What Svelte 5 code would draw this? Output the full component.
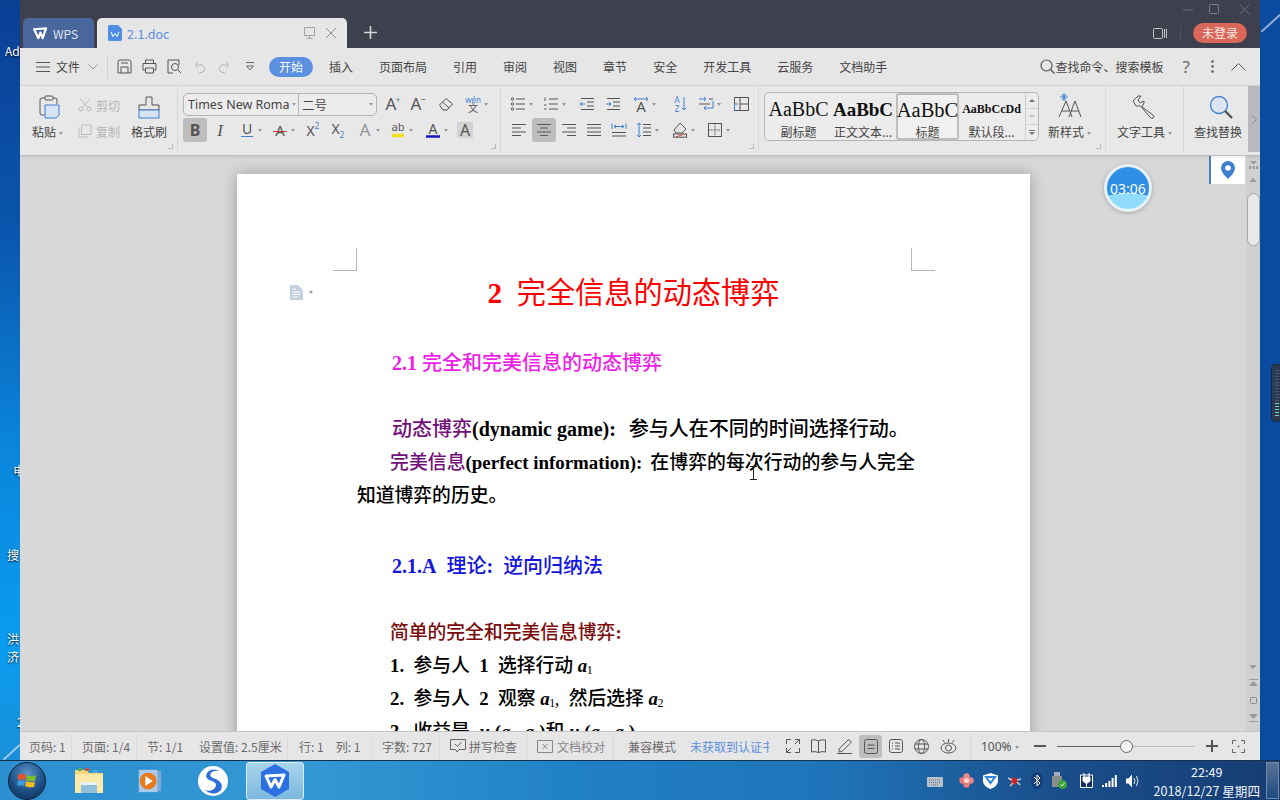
<script>
  const blue = '#3f7fd0';
  const t = (s, x = 8, y = 13, size = 15, extra = '') =>
    `<text x="${x}" y="${y}" font-size="${size}" text-anchor="middle" fill="#555" stroke="none" ${extra}>${s}</text>`;
  const lines = (rows) => rows.map(([a, y, b]) => `<path d="M${a} ${y}H${b}"/>`).join('');

  const fontRow1 = [
    { ml: 8, d: t('A', 6, 14, 17) + t('+', 13, 7, 9, 'fill-opacity=".8"') },
    { ml: 9, d: t('A', 6, 14, 17) + t('−', 13, 7, 9) },
    { ml: 12, d: '<path d="M1.5 9 8 2.5 14.5 8 9 14H5z M4.5 6 11 12"/>' },
    { ml: 11, caret: true, d: `<text x="8" y="6.5" font-size="8" text-anchor="middle" fill="${blue}" stroke="none">wén</text>` + t('文', 8, 16, 10) }
  ];
  const fontRow2 = [
    { ml: 0, active: true, d: t('B', 8, 13.5, 16, 'font-weight="700" fill="#333"') },
    { ml: 5, d: t('I', 8, 13.5, 17, 'font-style="italic" font-family="Liberation Serif"') },
    { ml: 11, caret: true, d: t('U', 8, 11.5, 14) + `<path d="M2 14.5H14" stroke="${blue}"/>` },
    { ml: 10, caret: true, d: t('A', 8, 14, 15) + '<path d="M1 9.5H15" stroke="#c9453a"/>' },
    { ml: 9, d: t('X', 6.5, 14, 14) + `<text x="13" y="7" font-size="8" text-anchor="middle" fill="${blue}" stroke="none">2</text>` },
    { ml: 9, d: t('X', 6.5, 12, 14) + `<text x="13" y="15.5" font-size="8" text-anchor="middle" fill="${blue}" stroke="none">2</text>` },
    { ml: 12, caret: true, d: t('A', 8, 14, 17, 'fill="#c4c4c4" fill-opacity=".6"') },
    { ml: 10, caret: true, d: t('ab', 8, 9, 11) + '<path d="M2 13.5H14" stroke="#f2e21d" stroke-width="3.5"/>' },
    { ml: 12, caret: true, d: t('A', 8, 12, 14) + '<path d="M1 14.5H15" stroke="#1515c8" stroke-width="2.5"/>' },
    { ml: 9, shaded: true, d: t('A', 8, 13.5, 16) }
  ];
  const paraRow1 = [
    { ml: -1, caret: true, d: '<circle cx="2.5" cy="3" r="1.2"/><circle cx="2.5" cy="8" r="1.2"/><circle cx="2.5" cy="13" r="1.2"/>' + lines([[6, 3, 15], [6, 8, 15], [6, 13, 15]]) },
    { ml: 10, caret: true, d: '<path d="M2 1.5V5M1 9h2.5M1 13h2.5"/>' + lines([[6, 3, 15], [6, 8, 15], [6, 13, 15]]) },
    { ml: 13, d: lines([[2, 2.5, 15], [8, 6, 15], [8, 10, 15], [2, 13.5, 15]]) + `<path d="M6 8H1M3 6 1 8l2 2" stroke="${blue}"/>` },
    { ml: 10, d: lines([[2, 2.5, 15], [8, 6, 15], [8, 10, 15], [2, 13.5, 15]]) + `<path d="M1 8H6M4 6l2 2-2 2" stroke="${blue}"/>` },
    { ml: 12, caret: true, d: t('A', 8, 16, 15) + `<path d="M1 3H15M3 1 1 3l2 2M13 1l2 2-2 2" stroke="${blue}"/>` },
    { ml: 16, d: `<text x="5" y="7" font-size="8" text-anchor="middle" fill="${blue}" stroke="none">A</text><text x="5" y="15.5" font-size="8" text-anchor="middle" fill="${blue}" stroke="none">Z</text><path d="M12 1V14M10 12l2 2 2-2" stroke="${blue}"/>` },
    { ml: 10, caret: true, d: `<path d="M1 3H8M6 1l2 2-2 2M15 12H6M8 10l-2 2 2 2M15 5V12" stroke="${blue}"/>` + lines([[11, 3, 15], [1, 8, 12]]) },
    { ml: 12, d: `<rect x="1.5" y="1.5" width="14" height="13"/><path d="M7 1.5V14.5M7 8H15.5" /><path d="M1.5 8H5M1.5 8V14.5" stroke="${blue}"/>` }
  ];
  const paraRow2 = [
    { ml: 0, d: lines([[1, 2.5, 15], [1, 6, 10], [1, 10, 15], [1, 13.5, 10]]) },
    { ml: 5, active: true, d: lines([[1, 2.5, 15], [4, 6, 12], [1, 10, 15], [4, 13.5, 12]]) },
    { ml: 5, d: lines([[1, 2.5, 15], [6, 6, 15], [1, 10, 15], [6, 13.5, 15]]) },
    { ml: 9, d: lines([[1, 2.5, 15], [1, 6, 15], [1, 10, 15], [1, 13.5, 15]]) },
    { ml: 9, d: lines([[1, 10.5, 15], [1, 14, 15]]) + `<path d="M1 1.5V7M15 1.5V7M3 4.5H13M5 3 3 4.5 5 6M11 3l2 1.5L11 6" stroke="${blue}"/>` },
    { ml: 9, caret: true, d: lines([[7, 2.5, 15], [7, 6, 15], [7, 10, 15], [7, 13.5, 15]]) + `<path d="M3 1V15M1 3l2-2 2 2M1 13l2 2 2-2" stroke="${blue}"/>` },
    { ml: 13, caret: true, d: '<path d="M8 1 14 7 10 11H4L2 8z"/><rect x="1.5" y="12" width="13" height="3.2"/><path d="M4 15 12 12" stroke="#d0483c"/>' },
    { ml: 12, caret: true, d: '<rect x="1.5" y="1.5" width="13" height="13"/><path d="M8 1.5V14.5M1.5 8H14.5" stroke-dasharray="1.5 1"/>' }
  ];

  const gallery = [
    { sample: 'AaBbC', label: '副标题', cls: 'g1' },
    { sample: 'AaBbC', label: '正文文本...', cls: 'g2' },
    { sample: 'AaBbC', label: '标题', cls: 'g3 picked' },
    { sample: 'AaBbCcDd', label: '默认段...', cls: 'g4' }
  ];
  const menus = ['开始', '插入', '页面布局', '引用', '审阅', '视图', '章节', '安全', '开发工具', '云服务', '文档助手'];
</script>

{#snippet tool(item)}
  <span class="tool" class:active={item.active} class:shaded={item.shaded} style:margin-left={item.ml + 'px'}>
    <svg class="ico" viewBox="0 0 16 16">{@html item.d}</svg>
    {#if item.caret}<i class="caret"></i>{/if}
  </span>
{/snippet}

{#snippet wlogo(color, w)}
  <svg width={w} height={w} viewBox="0 0 20 20" fill="none" stroke={color} stroke-width="2.6" stroke-linejoin="round">
    <path d="M2.5 5 16.5 4 12.5 15.5 10 9 7.5 15.5z" />
  </svg>
{/snippet}

<div class="desktop">
  <span class="dt d1">Ad</span>
  <span class="dt d2">电</span>
  <span class="dt d3">搜</span>
  <span class="dt d4">洪<br />济</span>
  <span class="dt d5">2</span>
  <div class="streak low"></div>
  <div class="streak high"></div>
  <div class="dock"><i class="bars"></i><i class="bars on"></i></div>

  <div class="window">
    <header class="titlebar">
      <div class="tabs">
        <div class="tab-home">{@render wlogo('#fff', 17)}<span>WPS</span></div>
        <div class="tab-doc">
          <svg width="14" height="16" viewBox="0 0 14 16"><path d="M1.5 0H10L14 4V14.5A1.5 1.5 0 0 1 12.5 16H1.5A1.5 1.5 0 0 1 0 14.5V1.5A1.5 1.5 0 0 1 1.5 0z" fill="#4f8fe6" /><path d="M3 7 5 11.5 7 8.5 9 11.5 11 7" fill="none" stroke="#fff" /></svg>
          <span class="doc-name">2.1.doc</span>
          <svg class="tab-act" width="12" height="14" viewBox="0 0 12 14" fill="none" stroke="#a5a5a5"><rect x=".5" y="1.5" width="10" height="8" /><path d="M5.5 9.5V12.5M2.5 12.5H8.5" /></svg>
          <svg class="tab-close" width="12" height="12" viewBox="0 0 12 12" stroke="#8f8f8f"><path d="M1 1 11 11M11 1 1 11" /></svg>
        </div>
        <svg class="tab-plus" width="13" height="13" viewBox="0 0 13 13" stroke="#d5d5d8" stroke-width="1.6"><path d="M6.5 0V13M0 6.5H13" /></svg>
      </div>
      <div class="winside">
        <div class="winctl">
          <svg width="10" height="10" viewBox="0 0 10 10" stroke="#6d707a"><path d="M0 6H10" /></svg>
          <svg width="10" height="10" viewBox="0 0 10 10" fill="none" stroke="#7b7e87"><rect x=".5" y=".5" width="9" height="9" rx="1" /></svg>
          <svg width="11" height="11" viewBox="0 0 11 11" stroke="#6d707a"><path d="M.5 .5 10.5 10.5M10.5 .5 .5 10.5" /></svg>
        </div>
        <div class="winuser">
          <svg width="14" height="13" viewBox="0 0 14 13" fill="none" stroke="#c2c3c8"><rect x=".5" y="1.5" width="9" height="10" rx="1" /><path d="M11.5 2V11M13.5 2V11" /></svg>
          <i class="thin-sep"></i>
          <span class="login">未登录</span>
        </div>
      </div>
    </header>

    <nav class="menubar">
      <svg class="burger" width="14" height="10" viewBox="0 0 14 10" stroke="#555"><path d="M0 .5H14M0 5H14M0 9.5H14" /></svg>
      <span class="file">文件</span>
      <svg class="chev" width="10" height="6" viewBox="0 0 10 6" fill="none" stroke="#999"><path d="M.5 .5 5 5 9.5 .5" /></svg>
      <i class="menu-sep"></i>
      <div class="quick">
        <svg width="15" height="15" viewBox="0 0 15 15" fill="none" stroke="#555"><path d="M1 3Q1 1 3 1H12Q14 1 14 3V14H1zM4 14V8H11V14M4 4H11" /></svg>
        <svg width="15" height="15" viewBox="0 0 15 15" fill="none" stroke="#555"><path d="M3.5 4V1H11.5V4M3.5 11H1V4.5H14V11H11.5M3.5 9H11.5V14H3.5z" /></svg>
        <svg width="15" height="15" viewBox="0 0 15 15" fill="none" stroke="#555"><path d="M6 14H1V1H12V6" /><circle cx="8" cy="8" r="3.5" /><path d="M10.5 10.5 14 14" /></svg>
        <svg class="undo" width="13" height="12" viewBox="0 0 13 12" fill="none" stroke="#b8b8b8"><path d="M4 1 1 4 4 7M1 4H8A4 4 0 0 1 8 11.5H5" /></svg>
        <svg width="13" height="12" viewBox="0 0 13 12" fill="none" stroke="#b8b8b8"><path d="M9 1 12 4 9 7M12 4H5A4 4 0 0 0 5 11.5H8" /></svg>
        <svg class="more" width="8" height="9" viewBox="0 0 8 9" fill="none" stroke="#666"><path d="M0 .5H8M.5 4 4 8 7.5 4z" /></svg>
      </div>
      <ul class="menus">
        {#each menus as m, i}<li class:current={i === 0}>{m}</li>{/each}
      </ul>
      <div class="menu-right">
        <div class="cmd">
          <svg width="15" height="15" viewBox="0 0 15 15" fill="none" stroke="#555" stroke-width="1.2"><circle cx="6.5" cy="6.5" r="5.5" /><path d="M10.5 10.5 14.5 14.5" /></svg>
          <span>查找命令、搜索模板</span>
        </div>
        <span class="help">?</span>
        <svg width="3" height="13" viewBox="0 0 3 13" fill="#555"><circle cx="1.5" cy="1.5" r="1.2" /><circle cx="1.5" cy="6.5" r="1.2" /><circle cx="1.5" cy="11.5" r="1.2" /></svg>
        <svg width="15" height="8" viewBox="0 0 15 8" fill="none" stroke="#555"><path d="M.5 7.5 7.5 .5 14.5 7.5" /></svg>
      </div>
    </nav>

    <section class="ribbon">
      <div class="grp clip">
        <div class="big paste">
          <svg width="24" height="24" viewBox="0 0 24 24" fill="none" stroke="#555"><path d="M5 3H18Q20 3 20 5V9M5 3Q3 3 3 5V18Q3 20 5 20H7" /><rect x="8" y="1" width="8" height="4" rx="1" fill="#e6e6e6" /><path d="M8 10H22V20L19 23H8z" fill="#d6e3f3" stroke={blue} /></svg>
          <span>粘贴<i class="caret"></i></span>
        </div>
        <div class="mini">
          <div class="mini-row">
            <svg width="14" height="14" viewBox="0 0 14 14" fill="none" stroke="#bbb"><circle cx="3" cy="11" r="2" /><circle cx="11" cy="11" r="2" /><path d="M4.5 9.5 12 1M9.5 9.5 2 1" /></svg>
            <span>剪切</span>
          </div>
          <div class="mini-row">
            <svg width="14" height="14" viewBox="0 0 14 14" fill="none" stroke="#bbb"><path d="M1 3.5V13H10.5M3.5 1H13V10.5H3.5z" /></svg>
            <span>复制</span>
          </div>
        </div>
        <div class="big painter">
          <svg width="22" height="24" viewBox="0 0 22 24" fill="none" stroke="#555"><path d="M8 2H14V10H21V15H1V10H8z" /><rect x="1" y="15" width="20" height="8" fill="#d6e3f3" stroke={blue} /></svg>
          <span>格式刷</span>
        </div>
        <i class="launch"></i>
      </div>

      <div class="grp font">
        <div class="row">
          <div class="fontbox">
            <span class="fname">Times New Roma<i class="caret"></i></span>
            <span class="fsize">二号<i class="caret"></i></span>
          </div>
          {#each fontRow1 as item}{@render tool(item)}{/each}
        </div>
        <div class="row">
          {#each fontRow2 as item}{@render tool(item)}{/each}
        </div>
        <i class="launch"></i>
      </div>

      <div class="grp para">
        <div class="row">
          {#each paraRow1 as item}{@render tool(item)}{/each}
        </div>
        <div class="row">
          {#each paraRow2 as item}{@render tool(item)}{/each}
        </div>
        <i class="launch"></i>
      </div>

      <div class="grp styles">
        <div class="gallery">
          {#each gallery as g}
            <div class="gitem {g.cls}"><b>{g.sample}</b><span>{g.label}</span></div>
          {/each}
          <div class="gscroll">
            <span><i class="up"></i></span>
            <span><i class="down off"></i></span>
            <span><i class="bar"></i><i class="down"></i></span>
          </div>
        </div>
        <div class="big newstyle">
          <svg width="26" height="26" viewBox="0 0 26 26" fill="none" stroke="#555"><path d="M5 1 9 7M9 1 5 7M7 .5V8M3 4H11" stroke={blue} /><path d="M2 24 9 8 15 24M5 18H12M12 24 18 8 24 24M14 18H22" /></svg>
          <span>新样式<i class="caret"></i></span>
        </div>
        <i class="launch"></i>
      </div>

      <div class="grp wordtool">
        <div class="big">
          <svg width="24" height="24" viewBox="0 0 24 24" fill="none" stroke="#555"><path d="M1 6 6 1H9L6 5 8 8 12 6V8L10 12 21 20Q23 22 21 23 19 24 18 22L8.500 11 4 11z" /></svg>
          <span>文字工具<i class="caret"></i></span>
        </div>
      </div>

      <div class="grp findrep">
        <div class="big">
          <svg width="24" height="24" viewBox="0 0 24 24" stroke="#555"><circle cx="10" cy="10" r="8.5" fill="#dde6f0" stroke={blue} stroke-width="1.3" /><path d="M16 16 23 23" stroke-width="2.4" /></svg>
          <span>查找替换</span>
        </div>
      </div>

      <div class="ribbon-next">
        <svg width="5" height="9" viewBox="0 0 5 9" fill="none" stroke="#888"><path d="M.5 .5 4.5 4.5 .5 8.5" /></svg>
      </div>
    </section>

    <main class="workspace">
      <div class="canvas">
        <article class="page">
          <i class="crop left"></i>
          <i class="crop right"></i>
          <div class="smarttag">
            <svg width="13" height="15" viewBox="0 0 13 15"><path d="M0 0H8L13 5V15H0z" fill="#c3d0df" /><path d="M2.5 4H6M2.5 7H10.5M2.5 9.5H10.5M2.5 12H8" stroke="#fff" /></svg>
            <i class="caret"></i>
          </div>

          <h1 class="ln title"><b>2</b>&nbsp;&nbsp;完全信息的动态博弈</h1>
          <h2 class="ln sec"><b>2.1</b> 完全和完美信息的动态博弈</h2>
          <p class="ln p1"><span class="term">动态博弈</span><b>(dynamic game):</b><span class="after">参与人在不同的时间选择行动。</span></p>
          <p class="ln p2"><span class="term">完美信息</span><b>(perfect information):</b><span class="after">在博弈的每次行动的参与人完全</span></p>
          <p class="ln p3">知道博弈的历史。</p>
          <h3 class="ln theory"><b>2.1.A</b>&nbsp;&nbsp;理论<b>:</b>&nbsp;&nbsp;逆向归纳法</h3>
          <p class="ln simple">简单的完全和完美信息博弈<b>:</b></p>
          <p class="ln item"><b>1.</b>&nbsp;&nbsp;参与人&nbsp;&nbsp;<b>1</b>&nbsp;&nbsp;选择行动 <em>a<sub>1</sub></em></p>
          <p class="ln item"><b>2.</b>&nbsp;&nbsp;参与人&nbsp;&nbsp;<b>2</b>&nbsp;&nbsp;观察 <em>a<sub>1</sub></em>,&nbsp;&nbsp;然后选择 <em>a<sub>2</sub></em></p>
          <p class="ln item"><b>3.</b>&nbsp;&nbsp;收益是&nbsp;&nbsp;<em>u<sub>1</sub></em><b>(</b><em>a<sub>1</sub></em><b>,</b> <em>a<sub>2</sub></em><b>)</b>和 <em>u<sub>2</sub></em><b>(</b><em>a<sub>1</sub></em><b>,</b> <em>a<sub>2</sub></em><b>)</b></p>

          <svg class="ibeam" width="7" height="14" viewBox="0 0 7 14" fill="none" stroke="#222"><path d="M0 .5H7M3.5 .5V13.5M0 13.5H7" /></svg>
        </article>

        <div class="timer"><span>03:06</span></div>
        <div class="pin">
          <svg width="14" height="18" viewBox="0 0 14 18"><path d="M7 0A7 7 0 0 1 14 7C14 11 10 15 7 18 4 15 0 11 0 7A7 7 0 0 1 7 0z" fill="#3f7fd0" /><circle cx="7" cy="7" r="2.8" fill="#fff" /></svg>
        </div>
      </div>

      <aside class="vscroll">
        <div class="vtop">
          <svg width="9" height="9" viewBox="0 0 9 9" fill="#9a9a9a"><path d="M1 0H8L4.5 3.5zM0 5H2V8H0zM3.5 5H5.5V8H3.5zM7 5H9V8H7z" /></svg>
          <i class="tri-up"></i>
        </div>
        <div class="thumb"></div>
        <div class="vbottom">
          <i class="tri-down"></i>
          <svg width="9" height="9" viewBox="0 0 9 9" fill="#9a9a9a"><path d="M0 1H9V2H0zM4.5 3 9 8H0z" /></svg>
          <svg width="9" height="9" viewBox="0 0 9 9" fill="none" stroke="#888"><rect x="1.5" y="1.5" width="6" height="6" rx="1" /></svg>
          <svg width="9" height="9" viewBox="0 0 9 9" fill="#9a9a9a"><path d="M0 0H9L4.5 5zM0 7H9V8H0z" /></svg>
        </div>
      </aside>
    </main>

    <footer class="status">
      <span class="st s1">页码: 1</span>
      <span class="st s2">页面: 1/4</span>
      <span class="st s3">节: 1/1</span>
      <span class="st s4">设置值: 2.5厘米</span>
      <span class="st s5"><span>行: 1</span><span>列: 1</span></span>
      <span class="st s6">字数: 727</span>
      <span class="st s7">
        <svg width="16" height="14" viewBox="0 0 16 14" fill="none" stroke="#666"><path d="M.5 .5H15.5V10.5H9L7 13 5.5 10.5H.5zM5 5 7.5 7.5 11.5 3" /></svg>
        拼写检查
      </span>
      <span class="st s8">
        <svg width="16" height="13" viewBox="0 0 16 13" fill="none" stroke="#888"><path d="M.5 .5H15.5V12.5H.5zM5.5 4 10.5 9M10.5 4 5.5 9" /></svg>
        文档校对
      </span>
      <span class="st s9">兼容模式</span>
      <span class="st s10"><span>未获取到认证书</span></span>
      <div class="views">
        <svg width="14" height="14" viewBox="0 0 14 14" fill="none" stroke="#555"><path d="M.5 5V.5H5M9 .5H13.5V5M13.5 9V13.5H9M5 13.5H.5V9M1 13 5 9M13 1 9 5" /></svg>
        <svg width="15" height="14" viewBox="0 0 15 14" fill="none" stroke="#555"><path d="M7.5 2Q4 0 .5 1V13Q4 12 7.5 13.5 11 12 14.5 13V1Q11 0 7.5 2zM7.5 2V13.5" /></svg>
        <svg width="15" height="15" viewBox="0 0 15 15" fill="none" stroke="#555"><path d="M2 10 11 1Q12 .5 13.5 2 14.5 3.5 13.5 4L5 12.5 2 13zM0 14.5H15" /></svg>
        <span class="view-on"><svg width="14" height="15" viewBox="0 0 14 15" fill="none" stroke="#555"><rect x=".5" y=".5" width="13" height="14" rx="2" /><path d="M3.5 6H10.5M3.5 9.5H10.5" /></svg></span>
        <svg width="14" height="14" viewBox="0 0 14 14" fill="none" stroke="#555"><rect x=".5" y=".5" width="13" height="13" rx="2" /><path d="M3 4H4M6 4H11M3 7H4M6 7H11M3 10H4M6 10H11" /></svg>
        <svg width="15" height="15" viewBox="0 0 15 15" fill="none" stroke="#555"><circle cx="7.5" cy="7.5" r="7" /><ellipse cx="7.5" cy="7.5" rx="3.2" ry="7" /><path d="M1 5H14M1 10H14" /></svg>
        <svg width="17" height="15" viewBox="0 0 17 15" fill="none" stroke="#555"><path d="M8.5 0V3M3 1 4.5 3.5M14 1 12.5 3.5" /><ellipse cx="8.5" cy="9" rx="7.5" ry="5" /><circle cx="8.5" cy="9" r="3" /></svg>
      </div>
      <div class="zoombar">
        <span class="pct">100%<i class="caret"></i></span>
        <svg width="12" height="2" viewBox="0 0 12 2" fill="#555"><rect width="12" height="2" /></svg>
        <div class="slider"><i class="knob"></i></div>
        <svg width="12" height="12" viewBox="0 0 12 12" fill="#555"><path d="M5 0H7V5H12V7H7V12H5V7H0V5H5z" /></svg>
        <svg class="fit" width="13" height="13" viewBox="0 0 13 13" fill="none" stroke="#666"><path d="M.5 4V.5H4M9 .5H12.5V4M12.5 9V12.5H9M4 12.5H.5V9" /><circle cx="6.5" cy="6.5" r=".6" /></svg>
      </div>
    </footer>
  </div>

  <div class="taskbar">
    <div class="orb">
      <svg width="20" height="20" viewBox="0 0 20 20">
        <path d="M1 4Q5 2 9 4L8 9Q5 7.5 1 9z" fill="#e8532d" />
        <path d="M10 4Q14 6 19 4L18 10Q14 11 9 9z" fill="#7fbb2f" />
        <path d="M1 10Q4 8.5 8 10L7 15Q4 13.5 0 15z" fill="#3c9be0" />
        <path d="M9 10Q13 12 18 11L17 16Q12 17 8 15z" fill="#f4bb1c" />
      </svg>
    </div>
    <div class="tb-app folder">
      <svg width="32" height="32" viewBox="0 0 32 32"><path d="M2 5H14L16 8H30V28H2z" fill="#f4d77c" /><path d="M2 9H30V28H2z" fill="#fbe9a8" /><path d="M5 3H9V6H5z" fill="#5fae4c" /><path d="M12 3H16V6H12z" fill="#c9503f" /><path d="M20 5H25V8H20z" fill="#4aa5d8" /><path d="M8 17H24V28H8z" fill="#8fc0dc" /><path d="M8 17H24V20H8z" fill="#e8f3f8" /></svg>
    </div>
    <div class="tb-app media">
      <svg width="26" height="28" viewBox="0 0 28 28"><path d="M20 3H26V25H20z" fill="#7aa9d4" /><path d="M2 2H22V26H2z" fill="#a9c9e6" /><circle cx="12" cy="14" r="9" fill="#e9791b" /><path d="M9 8.5 17 14 9 19.5z" fill="#fff" /></svg>
    </div>
    <div class="tb-app sogou">
      <svg width="32" height="32" viewBox="0 0 32 32"><circle cx="16" cy="16" r="15" fill="#fff" /><path d="M23 6Q14 2 10 8 7 14 15 16 21 18 18 23 15 27 8 25 17 32 24 25 27 18 19 14 11 12 14 8 16 5 23 6z" fill="#2c6fd6" /></svg>
    </div>
    <div class="tb-app tb-wps">
      <svg width="30" height="33" viewBox="0 0 30 33"><path d="M15 0 29 8V25L15 33 1 25V8z" fill="#2c6fe0" /><path d="M6 12 24 11 19 23 15 15.5 11 23z" fill="none" stroke="#fff" stroke-width="3" stroke-linejoin="round" /></svg>
    </div>

    <div class="tray">
      <svg class="kb" width="16" height="12" viewBox="0 0 16 12"><rect y="2" width="16" height="10" rx="1" fill="#b8c2cc" /><path d="M2 5H14M2 7.5H14M4 10H12" stroke="#68737e" stroke-dasharray="1 1" /></svg>
      <svg width="15" height="15" viewBox="0 0 15 15"><circle cx="7.5" cy="3.5" r="3.2" fill="#e88" /><circle cx="3.5" cy="7.5" r="3.2" fill="#e77" /><circle cx="11.5" cy="7.5" r="3.2" fill="#e88" /><circle cx="7.5" cy="11.5" r="3.2" fill="#e77" /><circle cx="7.5" cy="7.5" r="2.6" fill="#f3d3d3" /></svg>
      <svg width="15" height="16" viewBox="0 0 15 16"><path d="M7.5 0 15 2.5V8Q15 13 7.5 16 0 13 0 8V2.5z" fill="#fff" /><path d="M3 4H12L7.5 10z" fill="none" stroke="#2e86de" stroke-width="2" /></svg>
      <svg width="15" height="13" viewBox="0 0 15 13"><circle cx="7" cy="7" r="3.4" fill="#c22" /><path d="M1 4 5 6M3 12 6 9M14 5 10 6M13 11 10 8" stroke="#c7ccd2" stroke-width="1.5" /></svg>
      <svg width="12" height="17" viewBox="0 0 12 17"><ellipse cx="6" cy="8.5" rx="6" ry="8.5" fill="#123d78" /><path d="M3 5 9 11 6 14V3L9 6 3 12" fill="none" stroke="#fff" /></svg>
      <svg width="15" height="17" viewBox="0 0 15 17"><rect x="2" width="6" height="4" fill="#aab" /><rect x="0" y="4" width="10" height="11" fill="#8a8f8a" /><circle cx="10.5" cy="12.5" r="4.5" fill="#3aa33a" /><path d="M8.5 12.5 10 14 12.5 11" fill="none" stroke="#fff" /></svg>
      <svg class="plug" width="13" height="15" viewBox="0 0 13 15"><path d="M.5 2H12.5V14.5H.5z" fill="#14305c" stroke="#fff" /><path d="M4 0V4M9 0V4M3 4H10V8L7.5 10H5.5L3 8zM6.5 10V14.5" fill="#fff" stroke="#fff" /></svg>
      <svg width="15" height="12" viewBox="0 0 15 12" fill="#fff"><rect y="10" width="2" height="2" /><rect x="3.2" y="8" width="2" height="4" /><rect x="6.4" y="6" width="2" height="6" /><rect x="9.6" y="3" width="2" height="9" /><rect x="12.8" width="2" height="12" /></svg>
      <svg width="14" height="14" viewBox="0 0 14 14"><path d="M0 4.5H2.5L6 .5V13.5L2.5 9.5H0z" fill="#fff" /><path d="M8 4Q10 7 8 10M10.5 2Q13.5 7 10.5 12" fill="none" stroke="#dfe7ef" /></svg>
    </div>
    <div class="clock">
      <span>22:49</span>
      <span>2018/12/27 星期四</span>
    </div>
    <div class="show-desktop"></div>
  </div>
</div>

<style>
:global(body) {
  margin: 0;
  overflow: hidden;
}
.desktop {
  position: relative;
  width: 1280px;
  height: 800px;
  overflow: hidden;
  font-family: "Noto Sans CJK SC", "Noto Sans", sans-serif;
  background: #0a4ba0;
}
.desktop::before {
  content: "";
  position: absolute;
  left: 0;
  top: 0;
  width: 20px;
  height: 760px;
  background: linear-gradient(180deg, #0b3f94 0, #0a55ad 30%, #0a87dc 60%, #0a9cf0 85%, #1a8fd8 100%);
}
.streak {
  position: absolute;
  width: 26px;
  height: 2px;
  background: rgba(255, 255, 255, .55);
  transform: rotate(-42deg);
}
.streak.low {
  left: 0;
  top: 750px;
}
.streak.high {
  left: 1258px;
  top: 22px;
}
.dt {
  position: absolute;
  color: #fff;
  font-size: 12px;
  line-height: 18px;
  text-shadow: 0 1px 2px #000;
}
.d1 { left: 5px; top: 42px; }
.d2 { left: 13px; top: 462px; }
.d3 { left: 7px; top: 546px; }
.d4 { left: 7px; top: 630px; }
.d5 { left: 17px; top: 713px; }
.dock {
  position: absolute;
  left: 1271px;
  top: 364px;
  width: 12px;
  height: 58px;
  border-radius: 4px;
  background: #2c3a54;
  border: 1px solid #1b2740;
  display: flex;
  flex-direction: column;
  gap: 1px;
  padding: 5px 0 5px 3px;
  box-sizing: border-box;
}
.bars {
  flex: 1;
  width: 4px;
  background: repeating-linear-gradient(180deg, #4a5670 0 1px, transparent 1px 3px);
}
.bars.on {
  flex: none;
  height: 13px;
  background: repeating-linear-gradient(180deg, #6fd6b8 0 1px, transparent 1px 3px);
}

.window {
  position: absolute;
  left: 20px;
  top: 0;
  width: 1240px;
  height: 760px;
  display: flex;
  flex-direction: column;
  background: #e6e6e6;
  overflow: hidden;
}
.titlebar {
  height: 48px;
  background: #3e414d;
  display: flex;
  justify-content: space-between;
  flex: none;
}
.tabs {
  display: flex;
  align-items: flex-end;
  padding-left: 3px;
}
.tab-home {
  width: 71px;
  height: 30px;
  box-sizing: border-box;
  padding-left: 9px;
  background: #4a679d;
  border-radius: 5px 5px 0 0;
  display: flex;
  align-items: center;
  gap: 4px;
  color: #dfe4ee;
  font-size: 12px;
}
.tab-doc {
  width: 250px;
  height: 30px;
  margin-left: 3px;
  box-sizing: border-box;
  padding: 0 10px 0 11px;
  background: #e6e6e6;
  border-radius: 5px 5px 0 0;
  display: flex;
  align-items: center;
  color: #5b8fe0;
  font-size: 12.5px;
}
.doc-name {
  margin-left: 5px;
  flex: 1;
}
.tab-act {
  margin-right: 9px;
}
.tab-plus {
  margin: 0 0 9px 17px;
}
.winside {
  width: 120px;
  display: flex;
  flex-direction: column;
}
.winctl {
  display: flex;
  justify-content: flex-end;
  align-items: center;
  gap: 16px;
  height: 18px;
  padding-right: 10px;
}
.winctl svg:nth-child(2) {
  margin-right: 4px;
}
.winuser {
  display: flex;
  align-items: center;
  justify-content: flex-end;
  padding: 5px 13px 0 0;
}
.thin-sep {
  width: 1px;
  height: 16px;
  background: #4d505c;
  margin: 0 12px 0 13px;
}
.login {
  width: 54px;
  height: 20px;
  border-radius: 10px;
  background: #d9685a;
  color: #fbe9e6;
  font-size: 12px;
  line-height: 20px;
  text-align: center;
}

.menubar {
  height: 38px;
  flex: none;
  box-sizing: border-box;
  border-bottom: 1px solid #d9d9d9;
  display: flex;
  align-items: center;
  padding-left: 16px;
  font-size: 12px;
  color: #444;
}
.file {
  margin-left: 6px;
}
.chev {
  margin-left: 8px;
}
.menu-sep {
  width: 1px;
  height: 24px;
  background: #cfcfcf;
  margin: 0 9px 0 9px;
}
.quick {
  display: flex;
  align-items: center;
  gap: 10px;
}
.quick .undo {
  margin-left: 2px;
}
.quick .more {
  margin-left: 6px;
}
.menus {
  list-style: none;
  margin: 0 0 0 15px;
  padding: 0;
  display: flex;
  align-items: center;
  gap: 26px;
}
.menus li.current {
  background: #5b8fe0;
  color: #fff;
  padding: 0 10px;
  height: 20px;
  line-height: 20px;
  border-radius: 10px;
  margin: 0 -10px 0 0;
}
.menu-right {
  margin-left: auto;
  display: flex;
  align-items: center;
  padding-right: 14px;
}
.cmd {
  display: flex;
  align-items: center;
  gap: 1px;
}
.help {
  font-size: 17px;
  color: #666;
  margin: 0 21px 0 19px;
  line-height: 1;
  font-family: "Noto Sans", sans-serif;
}
.menu-right > svg:last-child {
  margin-left: 17px;
}

.ribbon {
  height: 69px;
  flex: none;
  display: flex;
  background: #e8e8e8;
  box-shadow: 0 1px 3px rgba(0, 0, 0, .18);
  position: relative;
  z-index: 2;
  font-size: 12px;
  color: #444;
}
.grp {
  position: relative;
  box-sizing: border-box;
  flex: none;
  height: 66px;
  border-right: 1px solid #d7d7d7;
}
.clip {
  width: 158px;
  display: flex;
  padding-left: 12px;
}
.font {
  width: 323px;
  padding: 6px 0 0 5px;
}
.para {
  width: 258px;
  padding: 6px 0 0 10px;
}
.styles {
  width: 347px;
  display: flex;
  padding: 6px 0 0 5px;
}
.wordtool {
  width: 78px;
  display: flex;
  justify-content: center;
}
.findrep {
  width: 63px;
  display: flex;
  justify-content: center;
  border: none;
  padding-left: 5px;
}
.ribbon-next {
  width: 13px;
  height: 66px;
  background: #b7b9be;
  display: flex;
  align-items: center;
  justify-content: center;
  margin-left: 1px;
}
.big {
  display: flex;
  flex-direction: column;
  align-items: center;
  padding-top: 9px;
  white-space: nowrap;
}
.big svg {
  margin-bottom: 5px;
}
.big span {
  line-height: 16px;
}
.paste {
  width: 34px;
  align-items: flex-start;
}
.paste svg {
  margin-left: 5px;
}
.mini {
  width: 46px;
  margin-left: 12px;
  padding-top: 11px;
  color: #b5b5b5;
}
.mini-row {
  display: flex;
  align-items: center;
  gap: 4px;
  height: 16px;
  margin-bottom: 10px;
}
.painter {
  margin-left: 7px;
}
.newstyle {
  margin-left: 9px;
  padding-top: 0;
}
.newstyle svg {
  margin: 1px 0 5px;
}
.findrep svg {
  margin-left: 6px;
}
.launch {
  position: absolute;
  right: 4px;
  bottom: 3px;
  width: 4px;
  height: 4px;
  border-right: 1px solid #bbb;
  border-bottom: 1px solid #bbb;
}
.row {
  display: flex;
  align-items: center;
  height: 24px;
  margin-bottom: 2px;
}
.tool {
  display: flex;
  align-items: center;
  flex: none;
  height: 24px;
}
.ico {
  width: 16px;
  height: 16px;
  fill: none;
  stroke: #555;
  stroke-width: 1;
  overflow: visible;
  font-family: "Noto Sans", "Noto Sans CJK SC", sans-serif;
}
.tool.active {
  width: 24px;
  justify-content: center;
  background: #bdbdbd;
  border-radius: 3px;
}
.tool.shaded .ico {
  background: #d2d2d2;
}
.caret {
  display: inline-block;
  width: 0;
  height: 0;
  margin-left: 3px;
  border: 2.5px solid transparent;
  border-top: 3px solid #999;
  border-bottom: 0;
  vertical-align: middle;
}
.fontbox {
  display: flex;
  width: 194px;
  height: 23px;
  box-sizing: border-box;
  border: 1px solid #b5b5b5;
  border-radius: 5px;
  background: #ececec;
  font-size: 12.5px;
  line-height: 21px;
  font-family: "Noto Sans", "Noto Sans CJK SC", sans-serif;
}
.fname {
  width: 115px;
  padding-left: 4px;
  box-sizing: border-box;
  border-right: 1px solid #b5b5b5;
  white-space: nowrap;
  overflow: hidden;
  display: flex;
  align-items: center;
  position: relative;
}
.fname .caret {
  position: absolute;
  right: 2px;
  top: 9px;
  background: #ececec;
}
.fsize {
  flex: 1;
  padding-left: 3px;
  display: flex;
  align-items: center;
  justify-content: space-between;
  padding-right: 3px;
  font-family: "Noto Sans CJK SC", sans-serif;
}
.gallery {
  display: flex;
  width: 275px;
  height: 49px;
  box-sizing: border-box;
  border: 1px solid #b5b5b5;
  border-radius: 5px;
  background: #ececec;
  padding-left: 2px;
}
.gitem {
  width: 63px;
  display: flex;
  flex-direction: column;
  align-items: center;
  white-space: nowrap;
  box-sizing: border-box;
}
.gitem b {
  height: 31px;
  line-height: 33px;
  font-family: "Liberation Serif", serif;
  color: #111;
  font-weight: 400;
}
.gitem span {
  line-height: 16px;
}
.g1 b { font-size: 20px; }
.g2 { width: 66px; }
.g2 b { font-size: 19px; font-weight: 700; }
.g3 b { font-size: 20.5px; }
.g4 { width: 65px; }
.g4 b { font-size: 12px; font-weight: 700; }
.picked {
  background: #f0f0f0;
  border: 2px solid #bdbdbd;
  border-radius: 3px;
  height: 47px;
}
.picked b {
  height: 29px;
  line-height: 31px;
}
.gscroll {
  width: 12px;
  margin-left: auto;
  border-left: 1px solid #cfcfcf;
  display: flex;
  flex-direction: column;
}
.gscroll span {
  flex: 1;
  display: flex;
  flex-direction: column;
  align-items: center;
  justify-content: center;
  gap: 1px;
  border-bottom: 1px solid #cfcfcf;
}
.gscroll span:last-child {
  border: 0;
}
.gscroll .up {
  border: 3px solid transparent;
  border-bottom: 3px solid #777;
  border-top: 0;
}
.gscroll .down {
  border: 3px solid transparent;
  border-top: 3px solid #777;
  border-bottom: 0;
}
.gscroll .off {
  opacity: .4;
}
.gscroll .bar {
  width: 6px;
  height: 1px;
  background: #777;
}

.workspace {
  flex: 1;
  min-height: 0;
  display: flex;
  background: #d8d8d8;
}
.canvas {
  flex: 1;
  position: relative;
  overflow: hidden;
}
.page {
  position: relative;
  width: 793px;
  height: 700px;
  margin: 19px 0 0 217px;
  box-sizing: border-box;
  padding: 102.5px 0 0 120px;
  background: #fff;
  box-shadow: 0 0 14px rgba(0, 0, 0, .28);
  font-family: "Liberation Serif", "Noto Sans CJK SC", serif;
  font-size: 20px;
  line-height: 33px;
  font-weight: 500;
  color: #000;
}
.ln {
  margin: 0;
  font: inherit;
  white-space: nowrap;
}
.title {
  font-size: 29.2px;
  font-weight: 400;
  color: #f00;
  text-align: center;
  margin-left: -120px;
}
.title b {
  font-weight: 700;
}
.sec {
  color: #f01ee8;
  margin: 37px 0 33px 35px;
}
.term {
  color: #73107a;
}
.after {
  margin-left: 13px;
}
.p1 { margin-left: 35px; }
.p2 { margin-left: 33px; font-size: 18.9px; }
.p2 .after { margin-left: 8px; }
.p3 { font-size: 18.8px; }
.theory {
  color: #1414e0;
  margin: 38px 0 33px 35px;
}
.simple {
  color: #7c0c0c;
  margin: 0 0 0 33px;
  font-size: 18.8px;
}
.item {
  margin-left: 33px;
  font-size: 18.8px;
}
.page em {
  font-style: italic;
  font-weight: 700;
  letter-spacing: -.5px;
}
.page sub {
  font-size: 12px;
  line-height: 0;
  font-style: normal;
  font-weight: 400;
  vertical-align: -2px;
}
.crop {
  position: absolute;
  top: 74px;
  width: 23px;
  height: 22px;
  border-bottom: 1px solid #b5b5b5;
}
.crop.left {
  left: 96px;
  border-right: 1px solid #b5b5b5;
}
.crop.right {
  left: 674px;
  border-left: 1px solid #b5b5b5;
}
.smarttag {
  position: absolute;
  left: 53px;
  top: 111px;
  display: flex;
  align-items: center;
  gap: 3px;
}
.ibeam {
  position: absolute;
  left: 513px;
  top: 292px;
}
.timer {
  position: absolute;
  left: 1084px;
  top: 9px;
  width: 48px;
  height: 48px;
  box-sizing: border-box;
  border: 3px solid #e9f2f8;
  border-radius: 50%;
  background:
    radial-gradient(ellipse 36px 16px at 50% 100%, #8fdcff 0 100%, transparent 100%),
    #2f8fe6;
  box-shadow: 0 1px 4px rgba(0, 0, 0, .25);
  display: flex;
  align-items: center;
  justify-content: center;
  color: #fff;
  font-size: 14px;
  font-family: "Noto Sans", sans-serif;
}
.pin {
  position: absolute;
  left: 1189px;
  top: 1px;
  width: 36px;
  height: 28px;
  box-sizing: border-box;
  border-left: 2px solid #4a7fc4;
  background: #fff;
  display: flex;
  align-items: center;
  justify-content: center;
}
.vscroll {
  width: 14px;
  flex: none;
  background: #d0d0d0;
  display: flex;
  flex-direction: column;
  align-items: center;
}
.vtop {
  display: flex;
  flex-direction: column;
  align-items: center;
  gap: 8px;
  height: 38px;
  padding-top: 6px;
  box-sizing: border-box;
}
.thumb {
  width: 13px;
  height: 53px;
  box-sizing: border-box;
  background: #e8e8e8;
  border: 1px solid #a8a8a8;
  border-radius: 7px;
}
.tri-up {
  border: 4px solid transparent;
  border-bottom: 4px solid #9a9a9a;
  border-top: 0;
}
.tri-down {
  border: 4px solid transparent;
  border-top: 4px solid #9a9a9a;
  border-bottom: 0;
}
.vbottom {
  margin-top: auto;
  display: flex;
  flex-direction: column;
  align-items: center;
  gap: 9px;
  padding-bottom: 8px;
}

.status {
  height: 29px;
  flex: none;
  box-sizing: border-box;
  border-top: 1px solid #c4c4c4;
  display: flex;
  align-items: center;
  font-size: 12px;
  color: #6b6b6b;
  position: relative;
  z-index: 2;
  background: #e6e6e6;
}
.st {
  box-sizing: border-box;
  height: 27px;
  line-height: 27px;
  border-right: 1px solid #dcdcdc;
  display: flex;
  align-items: center;
  white-space: nowrap;
  padding-left: 9px;
  flex: none;
}
.s1 { width: 52px; }
.s2 { width: 65px; padding-left: 10px; }
.s3 { width: 52px; padding-left: 10px; border: 0; }
.s4 { width: 99px; padding-left: 10px; }
.s5 { width: 84px; padding-left: 11px; gap: 12px; }
.s6 { width: 68px; padding-left: 10px; }
.s7 { width: 87px; padding-left: 10px; gap: 3px; }
.s8 { width: 87px; padding-left: 10px; gap: 4px; color: #888; }
.s9 { width: 76px; padding-left: 14px; border: 0; }
.s10 { width: 93px; padding-left: 0; border: 0; color: #5b8fe0; }
.s10 span {
  width: 79px;
  overflow: hidden;
}
.views {
  display: flex;
  align-items: center;
  gap: 11px;
  height: 27px;
  padding: 0 13px 0 0;
  border-right: 1px solid #dcdcdc;
  margin-left: 3px;
}
.view-on {
  width: 23px;
  height: 23px;
  background: #bdbdbd;
  border-radius: 3px;
  display: flex;
  align-items: center;
  justify-content: center;
  margin: 0 -4px;
}
.zoombar {
  display: flex;
  align-items: center;
  padding-left: 10px;
  color: #555;
}
.pct {
  width: 53px;
  font-family: "Noto Sans", sans-serif;
}
.slider {
  position: relative;
  width: 138px;
  height: 1px;
  background: #bbb;
  margin: 0 11px;
}
.slider::before {
  content: "";
  position: absolute;
  left: 0;
  top: 0;
  width: 63px;
  height: 1px;
  background: #666;
}
.knob {
  position: absolute;
  left: 63px;
  top: -6px;
  width: 13px;
  height: 13px;
  box-sizing: border-box;
  border: 1px solid #666;
  border-radius: 50%;
  background: #f2f2f2;
}
.fit {
  margin-left: 14px;
}

.taskbar {
  position: absolute;
  left: 0;
  top: 760px;
  width: 1280px;
  height: 40px;
  box-sizing: border-box;
  border-top: 1px solid #16314f;
  background: linear-gradient(90deg, #2b8fd0 0, #3398d4 24%, #2080c4 45%, #1f74b8 65%, #1a4f8c 82%, #163c72 100%);
  display: flex;
  align-items: center;
}
.orb {
  width: 38px;
  height: 38px;
  margin-left: 8px;
  flex: none;
  box-sizing: border-box;
  border: 1px solid #123;
  border-radius: 50%;
  background: radial-gradient(circle at 50% 30%, #5b96c8 0, #1c4f86 55%, #0d2b50 100%);
  display: flex;
  align-items: center;
  justify-content: center;
}
.tb-app {
  flex: none;
  display: flex;
  align-items: center;
  justify-content: center;
}
.folder { margin-left: 27px; width: 32px; }
.media { margin-left: 32px; width: 26px; }
.sogou { margin-left: 34px; width: 32px; }
.tb-wps {
  margin-left: 17px;
  width: 58px;
  height: 38px;
  box-sizing: border-box;
  background: linear-gradient(180deg, #a8d4ec, #7cb8dd);
  border: 1px solid #d7ecf8;
  border-radius: 3px;
}
.tray {
  position: absolute;
  left: 927px;
  top: 0;
  height: 39px;
  display: flex;
  align-items: center;
  gap: 9px;
}
.kb {
  margin-right: 7px;
}
.plug {
  margin-left: 4px;
}
.clock {
  position: absolute;
  right: 20px;
  top: 0;
  height: 39px;
  display: flex;
  flex-direction: column;
  align-items: center;
  justify-content: center;
  color: #f2f6fa;
  font-size: 12.6px;
  line-height: 19px;
  white-space: nowrap;
}
.show-desktop {
  position: absolute;
  right: 1px;
  top: 1px;
  width: 13px;
  height: 37px;
  box-sizing: border-box;
  border: 1px solid #6f8aa8;
  background: linear-gradient(180deg, #5a7596, #1d4a80);
}
</style>
